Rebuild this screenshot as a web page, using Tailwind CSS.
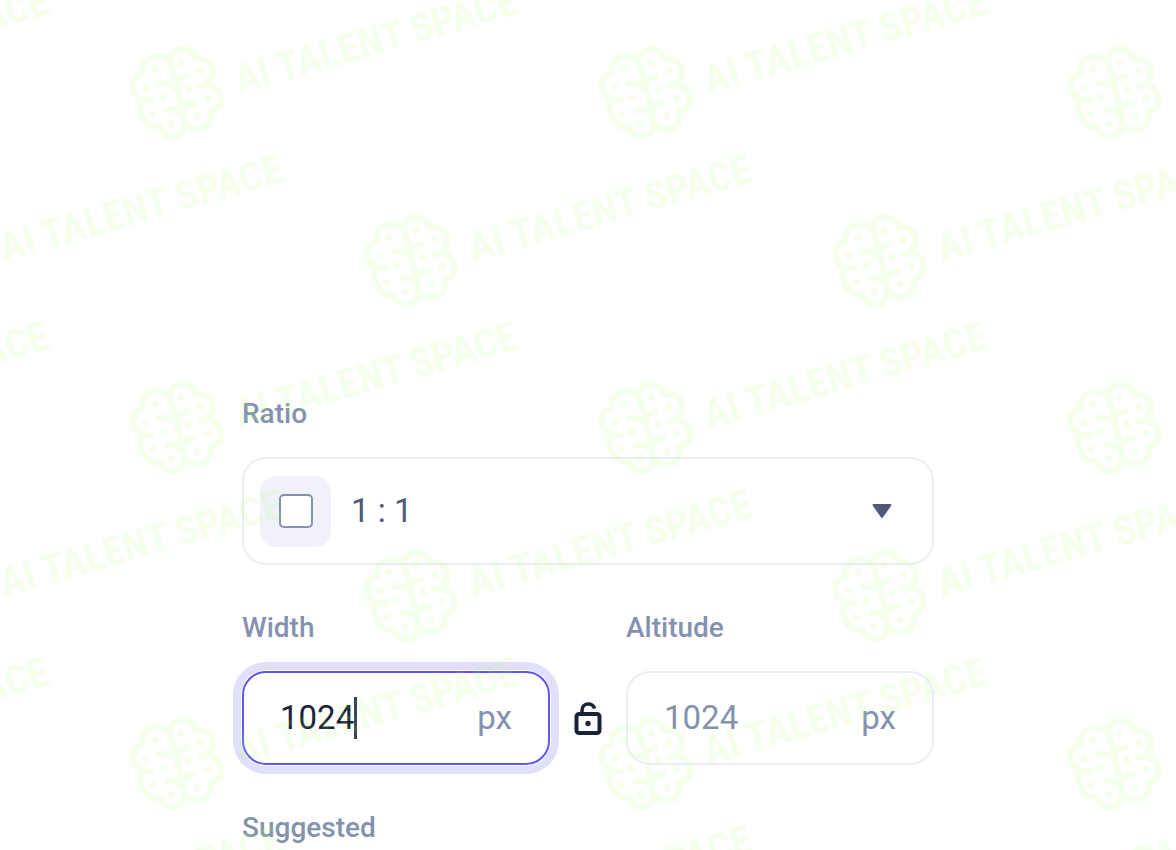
<!DOCTYPE html>
<html lang="en">
<head>
  <meta charset="UTF-8">
  <meta name="viewport" content="width=device-width, initial-scale=1.0">
  <title>Image size</title>
  <script src="https://cdn.jsdelivr.net/npm/@tailwindcss/browser@4"></script>
</head>
<body class="bg-white font-[Roboto,sans-serif]">
  <div class="relative h-screen overflow-hidden">
    <form class="mx-auto flex w-full max-w-[692px] flex-col pt-[398px]">
      <label for="ratio" class="text-[28px] leading-8 font-medium text-[#8492af]">Ratio</label>
      <div class="relative mt-[27px] flex h-[108px] items-center rounded-3xl border-2 border-[#eceef6] pl-4">
        <div class="flex size-[71px] shrink-0 items-center justify-center rounded-2xl bg-[#f1f2f9]">
          <div class="size-[34px] rounded-[5px] border-2 border-[#8492af] bg-white"></div>
        </div>
        <select id="ratio" class="h-full min-w-0 flex-1 appearance-none pl-5 text-[33px] leading-10 text-[#505a77] outline-none">
          <option>1 : 1</option>
        </select>
        <svg class="pointer-events-none absolute right-10 h-4 w-5" viewBox="0 0 20 16" fill="#505a77" stroke="#505a77" stroke-width="2" stroke-linejoin="round" aria-hidden="true">
          <path d="M1.500 2h17L10 14z" />
        </svg>
      </div>

      <div class="mt-[47px] flex items-end">
        <div class="min-w-0 flex-1">
          <label for="width" class="block text-[28px] leading-8 font-medium text-[#8492af]">Width</label>
          <div class="mt-[27px] flex h-[94px] items-center rounded-3xl border-2 border-[#5f57f0] px-9 text-[33px] leading-10 ring-8 ring-[#e0dffc] ring-offset-1">
            <input id="width" type="text" value="1024" class="field-sizing-content min-w-0 text-[#1a2238] caret-transparent outline-none">
            <span class="h-[42px] w-[3px] shrink-0 bg-[#1a2238]/85"></span>
            <span class="ml-auto text-[#8492af]">px</span>
          </div>
        </div>
        <button type="button" aria-label="Unlock proportions" class="flex h-[94px] w-[76px] shrink-0 items-center justify-center">
          <svg class="h-9 w-7" viewBox="0 0 28 36" fill="none" stroke="#1a2238" stroke-width="4" stroke-linecap="butt" stroke-linejoin="round" aria-hidden="true">
            <rect x="2.500" y="14" width="23" height="19" rx="2.500" />
            <path d="M8 14V10.500C8 6.500 10.700 4 14.200 4C17.500 4 19.600 5.500 20.700 8.500" stroke-width="3.500" />
            <circle cx="14" cy="23.500" r="2.700" fill="#1a2238" stroke="none" />
          </svg>
        </button>
        <div class="min-w-0 flex-1">
          <label for="altitude" class="block text-[28px] leading-8 font-medium text-[#8492af]">Altitude</label>
          <div class="mt-[27px] flex h-[94px] items-center rounded-3xl border-2 border-[#eceef6] px-9 text-[33px] leading-10 text-[#8492af]">
            <input id="altitude" type="text" value="1024" class="w-full min-w-0 outline-none">
            <span>px</span>
          </div>
        </div>
      </div>

      <h2 class="mt-[47px] text-[28px] leading-8 font-medium text-[#8492af]">Suggested</h2>
    </form>

    <!-- watermark -->
    <svg class="pointer-events-none absolute inset-0 size-full" aria-hidden="true">
      <defs>
        <g id="mark">
          <g transform="scale(0.3333) translate(-168 -189)" fill="none" stroke="#aaff70" stroke-width="19" stroke-linecap="round" stroke-linejoin="round">
            <path d="M149 93C135 78 110 75 91 84C73 92 64 109 68 128C48 134 37 151 38 170C39 195 62 215 96 210M63 212C55 245 70 292 118 291C129 311 144 322 162 319C183 316 194 302 192 280C191 248 171 163 149 93C153 67 170 56 188 57C207 58 221 69 227 88C253 83 277 98 279 122C280 140 271 153 257 165C282 164 300 181 302 204C303 226 291 240 272 245C276 277 261 297 235 298C216 299 202 290 193 279M257 165C251 169 246 167 240 168M119 160C139 156 151 160 165 171C166 154 181 145 200 139M143 241C160 235 175 242 186 253C187 233 201 221 222 219" />
            <g fill="#aaff70" stroke="none">
              <circle cx="105" cy="118" r="11" />
              <circle cx="77" cy="173" r="11" />
              <circle cx="129" cy="201" r="11" />
              <circle cx="98" cy="252" r="11" />
              <circle cx="153" cy="282" r="11" />
              <circle cx="184" cy="97" r="11" />
              <circle cx="242" cy="124" r="11" />
              <circle cx="207" cy="179" r="11" />
              <circle cx="264" cy="205" r="11" />
              <circle cx="232" cy="259" r="11" />
            </g>
          </g>
          <text transform="translate(63 1) rotate(-16)" class="fill-[#aaff70] font-['Roboto_Condensed','Liberation_Sans_Narrow','Open_Sans_Condensed','DejaVu_Sans_Condensed',sans-serif] text-[41px] font-bold">AI TALENT SPACE</text>
        </g>
      </defs>
      <g opacity="0.130">
        <use href="#mark" x="-293" y="93" />
        <use href="#mark" x="176" y="93" />
        <use href="#mark" x="645" y="93" />
        <use href="#mark" x="1114" y="93" />
        <use href="#mark" x="-59" y="261" />
        <use href="#mark" x="410" y="261" />
        <use href="#mark" x="879" y="261" />
        <use href="#mark" x="-293" y="428" />
        <use href="#mark" x="176" y="428" />
        <use href="#mark" x="645" y="428" />
        <use href="#mark" x="1114" y="428" />
        <use href="#mark" x="-59" y="596" />
        <use href="#mark" x="410" y="596" />
        <use href="#mark" x="879" y="596" />
        <use href="#mark" x="-293" y="764" />
        <use href="#mark" x="176" y="764" />
        <use href="#mark" x="645" y="764" />
        <use href="#mark" x="1114" y="764" />
        <use href="#mark" x="-59" y="932" />
        <use href="#mark" x="410" y="932" />
        <use href="#mark" x="879" y="932" />
      </g>
    </svg>
  </div>
</body>
</html>
